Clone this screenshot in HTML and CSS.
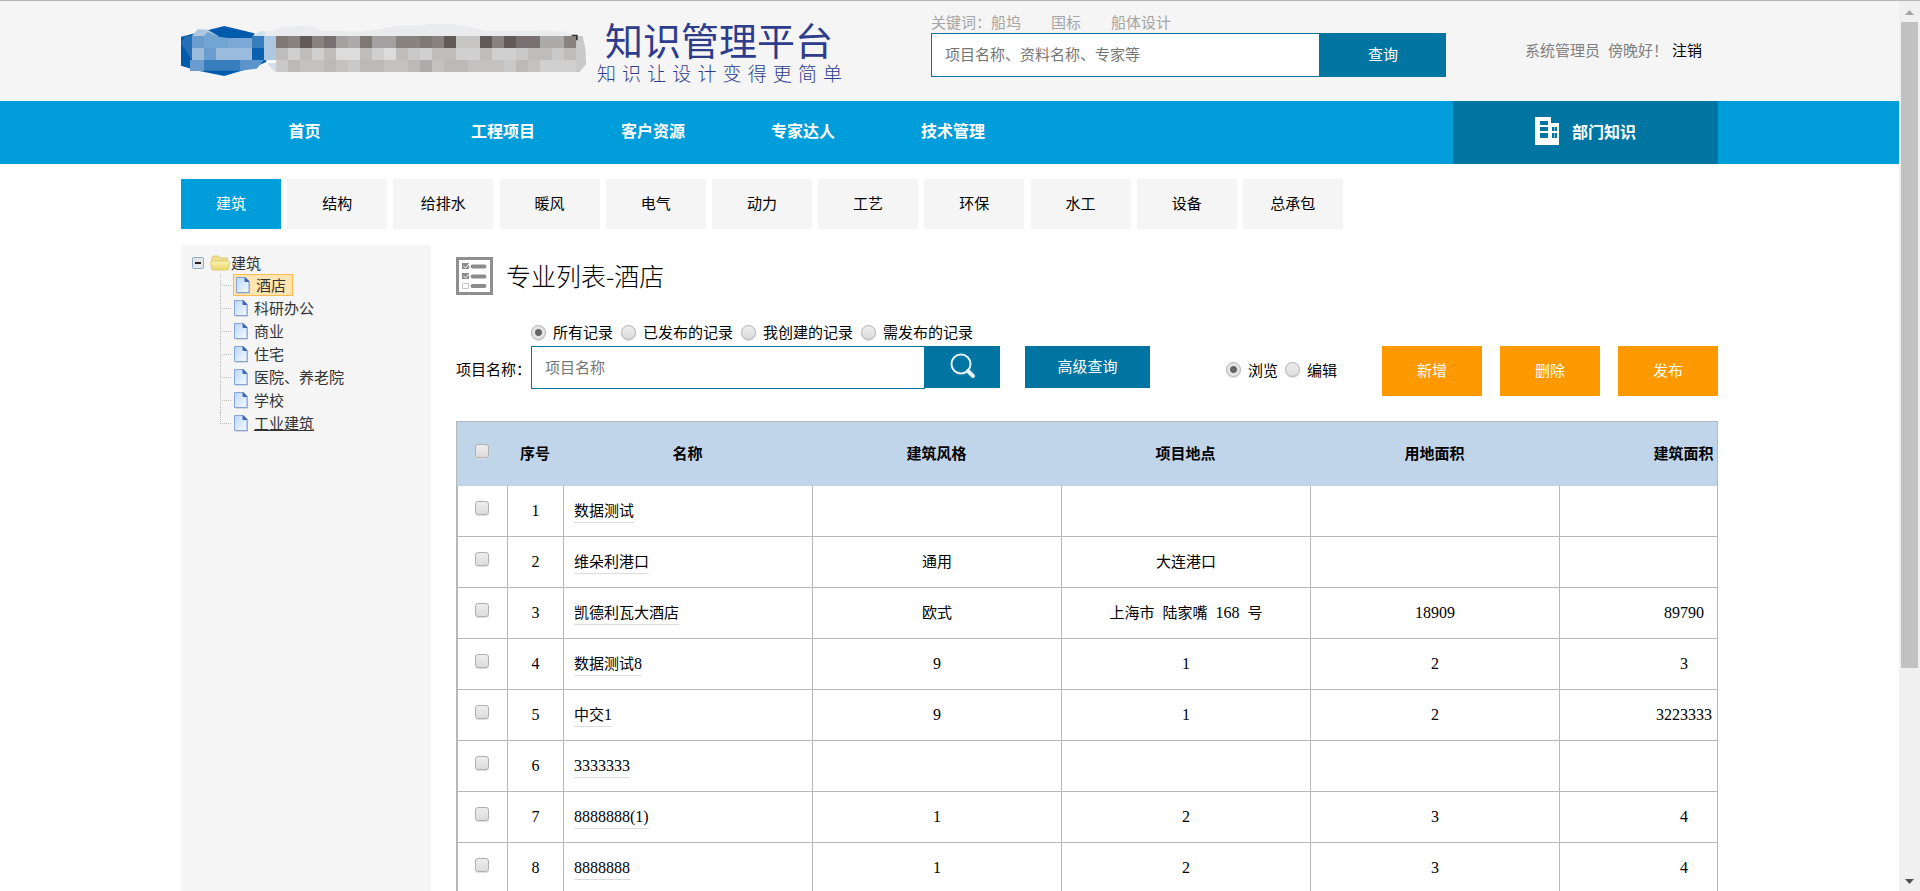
FILE: index.html
```html
<!DOCTYPE html>
<html lang="zh-CN">
<head>
<meta charset="utf-8">
<title>知识管理平台</title>
<link rel="stylesheet" href="styles.css">
</head>
<body>
<svg class="defs" width="0" height="0" aria-hidden="true">
  <defs>
    <linearGradient id="paper" x1="0" y1="0" x2="1" y2="1"><stop offset="0" stop-color="#b9d7fb"/><stop offset="1" stop-color="#f6fbff"/></linearGradient>
    <linearGradient id="gold" x1="0" y1="0" x2="0" y2="1"><stop offset="0" stop-color="#fbf3b0"/><stop offset="1" stop-color="#ecd66c"/></linearGradient>
    <symbol id="page" viewBox="0 0 16 18">
      <path d="M2.500 2.500h8.500l4 4v11h-12.500z" fill="#8d93a8" opacity=".6"/>
      <path d="M1.500 1.500h8.500l4 4v11h-12.500z" fill="url(#paper)" stroke="#86a3d8"/>
      <path d="M10 1.500v4h4z" fill="#3f66b0" stroke="#3f66b0"/>
    </symbol>
  </defs>
</svg>
<div class="screen">
  <div class="view">
    <header class="header">
      <div class="wrap header-row">
        <svg class="logo" viewBox="0 0 1242 192" aria-label="logo" role="img">
          <path fill="#005bac" d="M0 56L130 24 220 46 220 90 256 126 256 132 222 146 130 174 44 157 0 143z"/>
          <path fill="#e9ebec" d="M215 54L245 41 278 38 300 28 340 24 390 25 422 39 540 40 600 33 650 23 715 23 745 18 815 18 870 28 925 39 1145 40 1185 54z"/>
          <path fill="#acc8e0" d="M33 54L50 34 80 35 112 54zM213 54h72v72h-36V90h-36z"/>
          <path fill="#d2dfea" d="M215 54l22-14h15v14zM256 132l29 2v28l-12-8z"/>
          <path fill="#2470b7" d="M0 76L12 54h21v72z"/>
          <path fill="#6a9ccd" d="M33 54h36v36H33zM69 90h36v36H69zM27 126h42v33H27z"/>
          <path fill="#73a5d2" d="M69 54L80 42 115 56 141 60v30H69z"/>
          <path fill="#7da9d6" d="M141 60h72v30h-72z"/>
          <path fill="#9bbbdd" d="M105 90h108v36H105zM33 90h36v36H33z"/>
          <path fill="#377cbd" d="M213 54h36v36h-36zM69 126h108v32H69z"/>
          <path fill="#0b60ae" d="M213 90h36v36h-36z"/>
          <path fill="#5b94ca" d="M177 126h72l-22 26-50 6z"/>
          <path fill="#fff" d="M256 128h38v7h-38z"/>
          <path fill="#c9c9c9" d="M285 54h920l8 36 2 36v13l-19 23H285z"/>
          <path fill="#332c2a" d="M1170 50h20v17h-6l-6-10z"/>
          <path fill="#7e7873" d="M285 54h36v36h-36zM537 54h36v36h-36zM717 54h36v36h-36z"/>
          <path fill="#88837f" d="M321 54h36v36h-36zM393 54h36v36h-36zM645 54h72v36h-72zM753 54h36v36h-36zM933 54h36v36h-36zM1149 54h36v36h-36z"/>
          <path fill="#625a57" d="M357 54h36v36h-36zM789 54h36v36h-36zM897 54h36v36h-36zM969 54h36v36h-36z"/>
          <path fill="#787071" d="M429 54h36v36h-36zM1005 54h72v36h-72z"/>
          <path fill="#a5a1a0" d="M465 54h36v36h-36zM573 54h72v36h-72z"/>
          <path fill="#adabaa" d="M501 54h36v36h-36zM1077 54h72v36h-72z"/>
          <path fill="#c7c6c4" d="M825 54h72v36h-72z"/>
          <path fill="#bfbdbc" d="M285 90h36v36h-36zM357 90h36v36h-36zM429 90h36v36h-36zM537 90h36v36h-36zM645 90h36v36h-36zM753 90h72v36h-72zM897 90h36v36h-36zM1041 90h72v36h-72zM1149 90h36v36h-36z"/>
          <path fill="#d1d0d0" d="M321 90h36v36h-36zM393 90h36v36h-36zM573 90h36v36h-36zM717 90h36v36h-36zM825 90h72v36h-72zM933 90h72v36h-72zM1077 126h108v36h-108z"/>
          <path fill="#dcdcdc" d="M465 90h72v36h-72zM609 90h36v36h-36z"/>
          <path fill="#bbbab9" d="M321 126h36v36h-36zM429 126h36v36h-36zM537 126h72v36h-72zM681 126h36v36h-36zM789 126h72v36h-72zM1005 126h36v36h-36z"/>
          <path fill="#afabaa" d="M717 126h36v36h-36z"/>
          <path fill="#c3c2c1" d="M357 126h72v36h-72zM465 126h36v36h-36zM609 126h72v36h-72zM753 126h36v36h-36zM861 126h108v36h-108zM1041 126h36v36h-36z"/>
        </svg>
        <div class="brand">
          <div class="brand-name">知识管理平台</div>
          <div class="brand-slogan">知识让设计变得更简单</div>
        </div>
        <form class="search">
          <div class="keywords"><span>关键词：<a href="#">船坞</a></span><a href="#">国标</a><a href="#">船体设计</a></div>
          <div class="search-bar">
            <input class="field" type="text" aria-label="搜索" placeholder="项目名称、资料名称、专家等">
            <button class="btn search-btn" type="button">查询</button>
          </div>
        </form>
        <div class="user"><span>系统管理员</span><span>傍晚好！</span><a href="#">注销</a></div>
      </div>
    </header>
    <nav class="nav">
      <div class="wrap nav-row">
        <a class="home" href="#">首页</a><a href="#">工程项目</a><a href="#">客户资源</a><a href="#">专家达人</a><a href="#">技术管理</a>
        <a class="dept" href="#">
          <svg width="24" height="28" viewBox="0 0 24 28" aria-hidden="true"><path fill="#fff" fill-rule="evenodd" d="M0 0h16v6h8v22H0zM5 4v4h8V4zM5 10v4h8v-4zM5 16v5h8v-5zM17 10v4h5v-4zM17 16v5h5v-5z"/><path fill="#fff" d="M19 10h1v11h-1z" opacity=".5"/></svg>
          部门知识
        </a>
      </div>
    </nav>
    <div class="wrap">
      <nav class="tabs">
        <a class="active" href="#">建筑</a><a href="#">结构</a><a href="#">给排水</a><a href="#">暖风</a><a href="#">电气</a><a href="#">动力</a><a href="#">工艺</a><a href="#">环保</a><a href="#">水工</a><a href="#">设备</a><a href="#">总承包</a>
      </nav>
      <div class="columns">
        <aside class="sidebar">
          <div class="root">
            <svg width="12" height="12" viewBox="0 0 12 12" aria-hidden="true"><rect x=".5" y=".5" width="11" height="11" rx="1" fill="#e4e8ec" stroke="#8fa9c0"/><path d="M3 6h6" stroke="#222" stroke-width="2"/></svg>
            <svg class="folder" width="20" height="16" viewBox="0 0 20 16" aria-hidden="true"><path d="M2 14V3l1.500-2h5L10 3h7.500v4" fill="#f0df8c" stroke="#d8c670"/><path d="M2 15L.5 7.500 1.500 6H18.500l1 1.500L18 15z" fill="url(#gold)" stroke="#dccb70"/></svg>
            <a href="#">建筑</a>
          </div>
          <ul class="tree">
            <li><a class="selected" href="#"><svg><use href="#page"/></svg>酒店</a></li>
            <li><a href="#"><svg><use href="#page"/></svg>科研办公</a></li>
            <li><a href="#"><svg><use href="#page"/></svg>商业</a></li>
            <li><a href="#"><svg><use href="#page"/></svg>住宅</a></li>
            <li><a href="#"><svg><use href="#page"/></svg>医院、养老院</a></li>
            <li><a href="#"><svg><use href="#page"/></svg>学校</a></li>
            <li><a href="#"><svg><use href="#page"/></svg><u>工业建筑</u></a></li>
          </ul>
        </aside>
        <main class="main">
          <h1 class="title">
            <svg width="37" height="38" viewBox="0 0 37 38" aria-hidden="true"><path d="M1.500 1.500h34v35h-34z" fill="#fff" stroke="#8f8f8f" stroke-width="3"/><path d="M6 6h7v6H6zM6 16h7v6H6z" fill="#8c8c8c"/><path d="M6.500 26.500h6v5h-6z" fill="#fff" stroke="#c8c8c8"/><path d="M7.500 9l2 2 3.500-4M7.500 19l2 2 3.500-4" fill="none" stroke="#fff"/><path d="M16.500 9.500h12M16.500 19.500h12M16.500 29h12" stroke="#8c8c8c" stroke-width="4" stroke-linecap="round"/></svg>
            <span>专业列表-酒店</span>
          </h1>
          <div class="radios scope">
            <label><input type="radio" name="scope" checked>所有记录</label>
            <label><input type="radio" name="scope">已发布的记录</label>
            <label><input type="radio" name="scope">我创建的记录</label>
            <label><input type="radio" name="scope">需发布的记录</label>
          </div>
          <div class="toolbar">
            <label class="name-label" for="pname">项目名称：</label>
            <input class="field name-field" id="pname" type="text" placeholder="项目名称">
            <button class="btn find" type="button" aria-label="搜索"><svg width="26" height="26" viewBox="0 0 26 26"><circle cx="11" cy="11" r="9.500" fill="none" stroke="#e4f1f7" stroke-width="2"/><path d="M18 18l5 5" stroke="#e4f1f7" stroke-width="4" stroke-linecap="round"/></svg></button>
            <button class="btn advanced" type="button">高级查询</button>
            <div class="radios mode">
              <label><input type="radio" name="mode" checked>浏览</label>
              <label><input type="radio" name="mode">编辑</label>
            </div>
            <div class="actions">
              <button type="button">新增</button><button type="button">删除</button><button type="button">发布</button>
            </div>
          </div>
          <div class="table-box">
            <table>
              <colgroup><col class="c-check"><col class="c-index"><col class="c-data"><col class="c-data"><col class="c-data"><col class="c-data"><col class="c-data"></colgroup>
              <thead><tr><th class="check"><input type="checkbox" aria-label="全选"></th><th>序号</th><th>名称</th><th>建筑风格</th><th>项目地点</th><th>用地面积</th><th>建筑面积</th></tr></thead>
              <tbody>
                <tr><td class="check"><input type="checkbox" aria-label="1"></td><td>1</td><td class="name"><a href="#">数据测试</a></td><td></td><td></td><td></td><td></td></tr>
                <tr><td class="check"><input type="checkbox" aria-label="2"></td><td>2</td><td class="name"><a href="#">维朵利港口</a></td><td><span class="zh">通用</span></td><td><span class="zh">大连港口</span></td><td></td><td></td></tr>
                <tr><td class="check"><input type="checkbox" aria-label="3"></td><td>3</td><td class="name"><a href="#">凯德利瓦大酒店</a></td><td><span class="zh">欧式</span></td><td class="place"><span class="zh">上海市</span> <span class="zh">陆家嘴</span> <span>168</span> <span class="zh">号</span></td><td>18909</td><td>89790</td></tr>
                <tr><td class="check"><input type="checkbox" aria-label="4"></td><td>4</td><td class="name"><a href="#">数据测试<span class="num">8</span></a></td><td>9</td><td>1</td><td>2</td><td>3</td></tr>
                <tr><td class="check"><input type="checkbox" aria-label="5"></td><td>5</td><td class="name"><a href="#">中交<span class="num">1</span></a></td><td>9</td><td>1</td><td>2</td><td>3223333</td></tr>
                <tr><td class="check"><input type="checkbox" aria-label="6"></td><td>6</td><td class="name"><a href="#"><span class="num">3333333</span></a></td><td></td><td></td><td></td><td></td></tr>
                <tr><td class="check"><input type="checkbox" aria-label="7"></td><td>7</td><td class="name"><a href="#"><span class="num">8888888(1)</span></a></td><td>1</td><td>2</td><td>3</td><td>4</td></tr>
                <tr><td class="check"><input type="checkbox" aria-label="8"></td><td>8</td><td class="name"><a href="#"><span class="num">8888888</span></a></td><td>1</td><td>2</td><td>3</td><td>4</td></tr>
              </tbody>
            </table>
          </div>
        </main>
      </div>
    </div>
  </div>
  <div class="scrollbar" aria-hidden="true">
    <svg width="9" height="5" viewBox="0 0 9 5"><path d="M0 5L4.500 0 9 5z" fill="#a3a3a3"/></svg>
    <div class="track"><div class="thumb"></div></div>
    <svg width="9" height="5" viewBox="0 0 9 5"><path d="M0 0L4.500 5 9 0z" fill="#505050"/></svg>
  </div>
</div>
</body>
</html>
```
FILE: styles.css
```css
* { box-sizing: border-box; }

body {
  margin: 0;
  background: #fff;
  color: #000;
  font: 15px/20px "Noto Sans CJK SC", sans-serif;
}

a { color: inherit; text-decoration: none; }
button, input { font: inherit; margin: 0; }
button { border: 0; padding: 0; color: #fff; cursor: pointer; }
.defs { position: absolute; }

.screen {
  display: flex;
  height: 100vh;
  overflow: hidden;
  border-top: 1px solid #b5b5b5;
}
.view { flex: 1; min-width: 0; display: flex; flex-direction: column; }
.view > .wrap:last-child { flex: 1; display: flex; flex-direction: column; }
.wrap { width: 100%; max-width: 1537px; margin: 0 auto; }

/* header */
.header { background: #f5f5f5; height: 100px; flex: none; }
.header-row { display: flex; align-items: flex-start; }
.logo { width: 414px; height: 64px; margin-top: 17px; flex: none; }
.brand { width: 250px; color: #2e3c8c; margin: 16px 0 0 2px; }
.brand-name { font-size: 38px; line-height: 44px; padding-left: 8px; white-space: nowrap; }
.brand-slogan { font-size: 19px; line-height: 24px; font-weight: 300; text-align: justify; text-align-last: justify; padding-right: 5px; }
.search { width: 515px; margin: 11px 0 0 84px; }
.keywords { display: flex; gap: 30px; color: #a5a5a5; height: 21px; }
.search-bar { display: flex; height: 44px; }
.field {
  flex: 1;
  min-width: 0;
  border: 1px solid #0075a2;
  border-radius: 0;
  padding: 0 13px 2px;
  background: #fff;
  outline: 0;
}
.field::placeholder { color: #757575; opacity: 1; }
.btn { background: #0075a2; padding-bottom: 2px; }
.search-btn { width: 126px; }
.user { display: flex; margin: 39px 0 0 79px; color: #808080; }
.user span + span { margin-left: 8px; }
.user a { color: #000; margin-left: 4px; }

/* primary navigation */
.nav { background: #009ddb; color: #fff; font-size: 16px; font-weight: bold; flex: none; }
.nav-row { display: flex; height: 63px; line-height: 58px; text-align: center; }
.nav a { width: 150px; }
.nav .home { width: 247px; }
.nav .dept {
  display: flex;
  align-items: center;
  justify-content: center;
  gap: 13px;
  width: 265px;
  margin-left: auto;
  padding-bottom: 4px;
  background: #0075a2;
}

.tabs { display: flex; justify-content: space-between; max-width: 1162px; width: 100%; padding: 15px 0 16px; }
.tabs a { width: 100px; line-height: 48px; height: 50px; text-align: center; background: #f5f5f5; }
.tabs .active { background: #009ddb; color: #fff; }

.columns { display: flex; flex: 1; }

/* category tree */
.sidebar { width: 250px; flex: none; background: #f5f5f5; padding: 7px 11px; color: #333; }
.root { display: flex; align-items: center; height: 22px; }
.root .folder { margin: 0 1px 0 6px; }
.tree { list-style: none; margin: 0 0 0 28px; padding: 0; }
.tree li { position: relative; height: 23px; padding-left: 13px; }
.tree li::before {
  content: "";
  position: absolute;
  left: 0;
  top: 0;
  height: 100%;
  border-left: 1px dotted #bbb;
}
.tree li:last-child::before { height: 50%; }
.tree li::after {
  content: "";
  position: absolute;
  left: 2px;
  top: 11px;
  width: 9px;
  border-top: 1px dotted #bbb;
}
.tree a { display: flex; width: max-content; align-items: center; gap: 5px; height: 22px; }
.tree svg { width: 16px; height: 18px; }
.tree .selected { background: #ffe6b0; border: 1px solid #ffb951; padding: 0 6px 0 1px; }

/* content */
.main { flex: 1; min-width: 0; padding: 12px 0 0 25px; }
.title { display: flex; align-items: flex-start; gap: 13px; margin: 0 0 27px; font-size: 25px; line-height: 36px; font-weight: 300; }
.radios { display: flex; gap: 7px; }
.radios label { display: flex; align-items: center; gap: 7px; }
.scope { padding-left: 75px; height: 20px; margin-bottom: 4px; gap: 8px; }
.toolbar { display: flex; align-items: flex-start; }
.name-label { width: 75px; line-height: 46px; }
.name-field { flex: none; width: 394px; height: 43px; }
.find { width: 75px; height: 42px; display: flex; align-items: center; justify-content: center; }
.advanced { width: 125px; height: 42px; margin-left: 25px; }
.mode { margin: 0 45px 0 auto; height: 47px; }
.actions { display: flex; gap: 18px; }
.actions button { width: 100px; height: 50px; padding-bottom: 2px; background: #f90; }

input[type="radio"], input[type="checkbox"] {
  appearance: none;
  border: 1px solid #b0b0b0;
  background: linear-gradient(#ededed, #dcdcdc);
  box-shadow: 0 1px 1px #ddd;
}
input[type="radio"] { width: 15px; height: 15px; border-radius: 50%; }
input[type="radio"]:checked { background: radial-gradient(circle, #666 0 3px, #e4e4e4 4px); }
input[type="checkbox"] { display: block; width: 14px; height: 14px; margin: 0 auto; border-radius: 3px; }

.table-box { margin-top: 25px; border: 1px solid #b8b8b8; overflow: hidden; }
table {
  width: 1352px;
  table-layout: fixed;
  border-collapse: separate;
  border-spacing: 0;
  text-align: center;
  font-family: "Liberation Serif", "Noto Sans CJK SC", serif;
  font-size: 16px;
}
.c-check { width: 51px; }
.c-index { width: 56px; }
.c-data { width: 249px; }
th { height: 64px; padding: 0 2px 0 0; background: #c1d5ea; font-size: 15px; }
td { height: 51px; padding: 0; border: solid #b8b8b8; border-width: 0 1px 1px 0; }
td.check { border-left-width: 1px; }
.check { padding: 0 2px 7px 0; }
td.name { text-align: left; padding-left: 10px; font-size: 15px; }
.name a { display: inline-block; border-bottom: 1px solid #ddd; line-height: 22px; }
.num { font-size: 16px; }
.zh { font-size: 15px; }
.place span + span { margin-left: 4px; }

/* scrollbar */
.scrollbar {
  width: 21px;
  flex: none;
  display: flex;
  flex-direction: column;
  align-items: center;
  padding: 9px 0 7px;
  background: #f0f0f0;
}
.track { flex: 1; width: 17px; padding: 7px 0; }
.thumb { height: 76%; background: #c1c1c1; }
```
